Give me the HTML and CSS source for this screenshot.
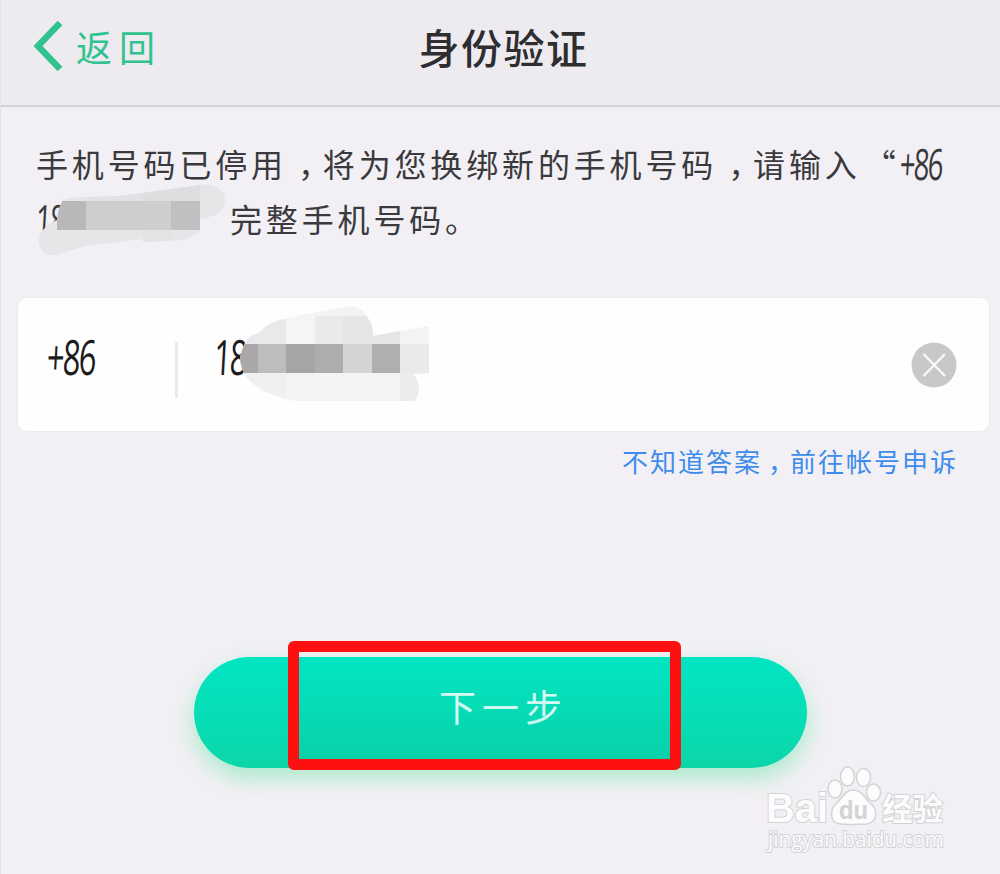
FILE: index.html
```
<!DOCTYPE html>
<html lang="zh-CN">
<head>
  <meta charset="UTF-8">
  <title>身份验证</title>
  <link rel="stylesheet" href="styles.css">
</head>
<body>

  <header class="topbar">
    <a class="back">
      <svg width="30" height="50" viewBox="0 0 30 50"><path d="M27 2 L5 25 L27 48" fill="none" stroke="#31c38f" stroke-width="6.500"/></svg>
      <span>返回</span>
    </a>
    <h1 class="title">身份验证</h1>
  </header>

  <main>
    <div class="notice">
      <p class="notice-line">手机号码已停用<span class="comma">，</span>将为您换绑新的手机号码<span class="comma">，</span>请输入<span class="quote">“</span><span class="num">+86</span></p>
      <p class="notice-line"><span class="hidden-num"><span class="num">18</span></span>完整手机号码。</p>
      <svg class="mask mask-notice" width="190" height="74" viewBox="37 184 190 74">
        <defs><clipPath id="clip-notice"><path d="M63 200 Q70 197 86 197 L120 196 L143 193 L200 185 C230 180 232 212 212 216 Q205 219 200 219 V230 Q192 239 180 240 L143 242 V239 L86 246 L56 255 C37 258 35 236 43 230 Q50 222 57 220 Q58 208 63 200Z"/></clipPath></defs>
        <g clip-path="url(#clip-notice)">
          <rect x="37" y="184" width="190" height="74" fill="#e7e5e8"/>
          <rect x="86" y="184" width="57" height="17" fill="#e3e1e4"/>
          <rect x="143" y="184" width="57" height="17" fill="#dfdde0"/>
          <rect x="57" y="201" width="29" height="29" fill="#b9b7ba"/>
          <rect x="86" y="201" width="85" height="29" fill="#cfcdd0"/>
          <rect x="171" y="201" width="29" height="29" fill="#c1bfc2"/>
          <rect x="143" y="230" width="28" height="28" fill="#e4e2e5"/>
        </g>
      </svg>
    </div>

    <div class="card">
      <span class="code"><span class="num">+86</span></span>
      <span class="divider"></span>
      <span class="phone"><span class="num">18</span></span>
      <svg class="clear" width="46" height="46" viewBox="0 0 46 46">
        <circle cx="23" cy="23" r="22.500" fill="#c9c7ca"/>
        <path d="M12.500 12 L34 34 M34 12 L12.500 34" stroke="#f8f7f9" stroke-width="2.500"/>
      </svg>
      <svg class="mask mask-phone" width="190" height="95" viewBox="240 306 190 95">
        <defs><clipPath id="clip-phone"><path d="M240 357 Q244 342 249 337 L260 332 C270 320 282 320 302 315 L345 307 Q363 304 367 317 Q373 323 373 336 L400 331 L429 326 V373 L413 374 C421 382 421 395 414 401 H295 Q258 394 245 375 Q240 366 240 357Z"/></clipPath></defs>
        <g clip-path="url(#clip-phone)">
          <rect x="240" y="306" width="190" height="95" fill="#f3f2f5"/>
          <rect x="240" y="306" width="46" height="38" fill="#eae8eb"/>
          <rect x="286" y="316" width="29" height="28" fill="#f5f4f7"/>
          <rect x="315" y="316" width="28" height="28" fill="#eae9ec"/>
          <rect x="343" y="316" width="57" height="28" fill="#e6e4e7"/>
          <rect x="240" y="344" width="18" height="29" fill="#a9a7aa"/>
          <rect x="258" y="344" width="28" height="29" fill="#bebcbf"/>
          <rect x="286" y="344" width="29" height="29" fill="#a6a4a7"/>
          <rect x="315" y="344" width="28" height="29" fill="#aeacaf"/>
          <rect x="343" y="344" width="29" height="29" fill="#d4d3d6"/>
          <rect x="372" y="344" width="28" height="29" fill="#b0aeb1"/>
          <rect x="400" y="344" width="30" height="29" fill="#eae9eb"/>
          <rect x="240" y="373" width="46" height="28" fill="#f0eff1"/>
          <rect x="400" y="373" width="30" height="28" fill="#ecebed"/>
        </g>
      </svg>
    </div>

    <a class="appeal">不知道答案<span class="appeal-comma">，</span>前往帐号申诉</a>

    <div class="action">
      <button class="next">下一步</button>
      <div class="highlight"></div>
    </div>
  </main>

  <svg class="watermark" width="190" height="96" viewBox="762 762 190 96">
    <g fill="#fcfcfd" stroke="#d3d2d5" stroke-width="1.500">
      <ellipse cx="835" cy="789" rx="7" ry="9"/>
      <ellipse cx="847.500" cy="776.500" rx="7" ry="9.500"/>
      <ellipse cx="863.500" cy="777.500" rx="7" ry="9"/>
      <ellipse cx="873.500" cy="792.500" rx="7" ry="8.500"/>
      <path d="M853 790 C845 790 842 798 836 804 C830 809 829 823 840 824 C847 825 860 824 867 824 C878 822 878 809 870 803 C864 797 862 790 853 790Z"/>
    </g>
    <text class="wm-logo" x="766" y="822" textLength="62" lengthAdjust="spacingAndGlyphs">Bai</text>
    <text class="wm-du" x="839" y="819" textLength="29" lengthAdjust="spacingAndGlyphs">du</text>
    <text class="wm-cn" x="882" y="820" textLength="61" lengthAdjust="spacingAndGlyphs">经验</text>
    <text class="wm-url" x="768" y="847" textLength="176" lengthAdjust="spacingAndGlyphs">jingyan.baidu.com</text>
  </svg>

</body>
</html>
```
FILE: styles.css
```
* {
  box-sizing: border-box;
}
body {
  position: relative;
  margin: 0;
  height: 874px;
  overflow: hidden;
  background-color: #f2f0f4;
  border-left: 1px solid #dfe6e9;
  font-family: "Noto Sans CJK SC", sans-serif;
  font-weight: 400;
  color: #3a393c;
}
.topbar {
  display: grid;
  grid-template-columns: 300px 1fr 326px;
  align-items: center;
  height: 107px;
  padding: 0 0 14px 32px;
  background-color: #edebef;
  border-bottom: 2px solid #d4d2d6;
}
.back {
  display: flex;
  align-items: center;
  gap: 13px;
  color: #31c38f;
  font-size: 36px;
  font-weight: 400;
  letter-spacing: 7px;
  line-height: 50px;
}
.title {
  margin: 0;
  text-align: center;
  font-size: 41px;
  font-weight: 500;
  letter-spacing: 1.500px;
  line-height: 50px;
  white-space: nowrap;
  color: #2e2d30;
}
.notice {
  position: relative;
  height: 190px;
  padding: 29px 0 0 35px;
}
.notice-line {
  display: flex;
  margin: 0;
  font-size: 32px;
  line-height: 55px;
  letter-spacing: 3.850px;
  white-space: nowrap;
}
.comma {
  margin: 0 -11px 0 11px;
}
.num {
  display: inline-block;
  font-family: "Open Sans", sans-serif;
  letter-spacing: -2px;
  transform: scale(0.86, 1.35) skewX(-5deg);
  transform-origin: left center;
}
.quote {
  width: 39px;
  text-align: right;
}
.hidden-num {
  width: 194px;
}
.mask {
  position: absolute;
}
.mask-notice {
  left: 36px;
  top: 77px;
}
.card {
  position: relative;
  display: flex;
  align-items: center;
  height: 135px;
  margin: 0 10px 0 16px;
  padding: 0 32px 0 29px;
  background-color: #fefefe;
  border: 1px solid #edebee;
  border-radius: 10px;
}
.code {
  width: 128px;
}
.code, .phone {
  font-size: 36px;
  line-height: 54px;
  padding-bottom: 18px;
  color: #1c1b1e;
}
.divider {
  width: 3px;
  height: 56px;
  margin: 10px 36px 0 0;
  background-color: #ebe9ec;
}
.clear {
  margin-left: auto;
}
.mask-phone {
  left: 222px;
  top: 8px;
}
.appeal {
  display: block;
  height: 60px;
  padding: 4px 42px 0 0;
  text-align: right;
  font-size: 26px;
  line-height: 50px;
  letter-spacing: 2px;
  color: #3d8cec;
}
.appeal-comma {
  margin: 0 -6px 0 6px;
}
.action {
  position: relative;
  width: 613px;
  margin: 165px 0 0 193px;
}
.next {
  display: block;
  width: 100%;
  height: 111px;
  padding: 0 0 14px 6px;
  border: none;
  border-radius: 56px;
  background: linear-gradient(#02e5c2, #06dfb8 45%, #0cd6a8);
  box-shadow: 0 10px 22px rgba(60, 225, 145, 0.4);
  color: #e3fff8;
  font-family: inherit;
  font-size: 37px;
  font-weight: 400;
  letter-spacing: 6px;
}
.highlight {
  position: absolute;
  left: 94px;
  top: -16px;
  width: 393px;
  height: 129px;
  border: 11px solid #fd1010;
  border-radius: 6px;
  background: linear-gradient(transparent 10%, rgba(0, 180, 165, 0.18));
}
.watermark {
  position: absolute;
  left: 761px;
  top: 762px;
}
.watermark text {
  fill: #fcfcfd;
  stroke: #d3d2d5;
  stroke-width: 2px;
  paint-order: stroke;
}
.wm-logo {
  font: bold 41px "Liberation Sans", sans-serif;
}
.watermark .wm-du {
  font: bold 25px "Liberation Sans", sans-serif;
  fill: #d3d2d5;
  stroke: none;
}
.wm-cn {
  font: bold 31px "Noto Sans CJK SC", sans-serif;
}
.wm-url {
  font: 21px "Open Sans", sans-serif;
}
```
